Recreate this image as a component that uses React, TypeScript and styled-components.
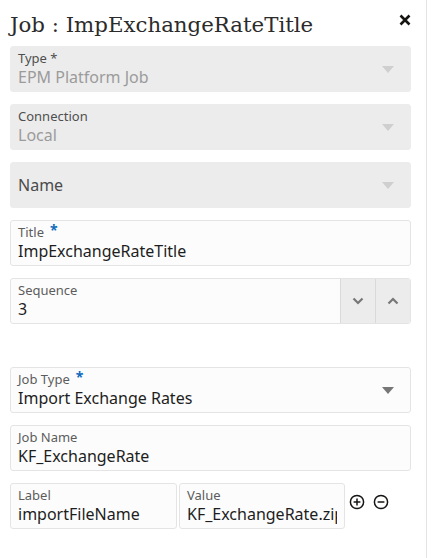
import styled, { createGlobalStyle } from "styled-components";

const GlobalStyle = createGlobalStyle`
  html, body {
    margin: 0;
    padding: 0;
    background: #ffffff;
  }
  body {
    font-family: "Noto Sans", "Open Sans", sans-serif;
  }
`;

const Panel = styled.div`
  box-sizing: border-box;
  width: 427px;
  height: 558px;
  border-right: 1px solid #e3e3e3;
  padding: 0 15px 0 10px;
  overflow: hidden;
`;

const Header = styled.div`
  display: flex;
  justify-content: space-between;
  align-items: flex-start;
  height: 46px;
`;

const Heading = styled.h1`
  margin: 11px 0 0;
  font-family: "DejaVu Serif", "Liberation Serif", serif;
  font-weight: 400;
  font-size: 21.3px;
  line-height: 28px;
  color: #2b2b2b;
`;

const Close = styled.button`
  margin: 11px -3px 0 0;
  padding: 0;
  border: none;
  background: none;
  width: 18px;
  height: 18px;
  display: flex;
  align-items: center;
  justify-content: center;
  cursor: pointer;
`;

const Form = styled.div`
  display: flex;
  flex-direction: column;
`;

const Field = styled.div<{ $disabled?: boolean; $gap?: number }>`
  box-sizing: border-box;
  height: 46px;
  margin-bottom: ${(p) => p.$gap ?? 12}px;
  display: flex;
  align-items: stretch;
  border-radius: 3px;
  border: 1px solid ${(p) => (p.$disabled ? "#ececec" : "#e4e4e4")};
  background: ${(p) => (p.$disabled ? "#ececec" : "#fcfcfc")};
  overflow: hidden;
`;

const FieldBody = styled.div<{ $center?: boolean }>`
  flex: 1;
  min-width: 0;
  padding: 0 7px;
  display: flex;
  flex-direction: column;
  justify-content: ${(p) => (p.$center ? "center" : "flex-start")};
  padding-top: ${(p) => (p.$center ? 0 : 3)}px;
`;

const Label = styled.div<{ $disabled?: boolean }>`
  display: flex;
  align-items: flex-start;
  height: 17px;
  font-size: 13px;
  line-height: 17px;
  color: ${(p) => (p.$disabled ? "#4f4f4f" : "#5c5c5c")};
  white-space: nowrap;
`;

const Required = styled.span`
  color: #0f6cbd;
  font-size: 14px;
  font-weight: 700;
  line-height: 12px;
  margin-left: 6px;
`;

const Value = styled.div<{ $disabled?: boolean }>`
  font-size: 16px;
  line-height: 20px;
  color: ${(p) => (p.$disabled ? "#9b9b9b" : "#1e1e1e")};
  white-space: nowrap;
  overflow: hidden;
`;

const Placeholder = styled.div`
  font-size: 16px;
  line-height: 20px;
  color: #4a4a4a;
`;

const Caret = styled.div<{ $disabled?: boolean }>`
  width: 44px;
  display: flex;
  align-items: center;
  justify-content: center;
  &::after {
    content: "";
    border-left: 6px solid transparent;
    border-right: 6px solid transparent;
    border-top: 7px solid ${(p) => (p.$disabled ? "#cfcfcf" : "#777777")};
  }
`;

const StepButton = styled.button`
  width: 35px;
  border: none;
  border-left: 1px solid #dadada;
  background: #ececec;
  padding: 0;
  display: flex;
  align-items: center;
  justify-content: center;
  cursor: pointer;
`;

const Spacer = styled.div`
  height: 43px;
`;

const PairRow = styled.div`
  display: flex;
  align-items: flex-start;
  gap: 2px;
`;

const PairField = styled(Field)<{ $w: number }>`
  width: ${(p) => p.$w}px;
`;

const RowActions = styled.div`
  display: flex;
  gap: 8px;
  padding: 11px 0 0 2px;
`;

const IconButton = styled.button`
  border: none;
  background: none;
  padding: 0;
  width: 16px;
  height: 16px;
  cursor: pointer;
`;

const Chevron = ({ up }: { up?: boolean }) => (
  <svg width="12" height="8" viewBox="0 0 12 8">
    <path
      d={up ? "M1.5 6.5 L6 2 L10.5 6.5" : "M1.5 1.5 L6 6 L10.5 1.5"}
      fill="none"
      stroke="#777"
      strokeWidth="2.2"
    />
  </svg>
);

const CircleIcon = ({ plus }: { plus?: boolean }) => (
  <svg width="16" height="16" viewBox="0 0 16 16">
    <circle cx="8" cy="8" r="6.6" fill="none" stroke="#161513" strokeWidth="1.5" />
    <path d="M4.6 8 H11.4" stroke="#161513" strokeWidth="1.5" />
    {plus && <path d="M8 4.6 V11.4" stroke="#161513" strokeWidth="1.5" />}
  </svg>
);

export default function App() {
  return (
    <>
      <GlobalStyle />
      <Panel>
        <Header>
          <Heading>Job : ImpExchangeRateTitle</Heading>
          <Close aria-label="Close">
            <svg width="12" height="12" viewBox="0 0 12 12">
              <path d="M1.5 1.5 L10.5 10.5 M10.5 1.5 L1.5 10.5" stroke="#161513" strokeWidth="2.6" />
            </svg>
          </Close>
        </Header>
        <Form>
          <Field $disabled>
            <FieldBody>
              <Label $disabled>Type *</Label>
              <Value $disabled>EPM Platform Job</Value>
            </FieldBody>
            <Caret $disabled />
          </Field>
          <Field $disabled>
            <FieldBody>
              <Label $disabled>Connection</Label>
              <Value $disabled>Local</Value>
            </FieldBody>
            <Caret $disabled />
          </Field>
          <Field $disabled>
            <FieldBody $center>
              <Placeholder>Name</Placeholder>
            </FieldBody>
            <Caret $disabled />
          </Field>
          <Field>
            <FieldBody>
              <Label>
                Title<Required>*</Required>
              </Label>
              <Value>ImpExchangeRateTitle</Value>
            </FieldBody>
          </Field>
          <Field $gap={0}>
            <FieldBody>
              <Label>Sequence</Label>
              <Value>3</Value>
            </FieldBody>
            <StepButton aria-label="Decrease">
              <Chevron />
            </StepButton>
            <StepButton aria-label="Increase">
              <Chevron up />
            </StepButton>
          </Field>
          <Spacer />
          <Field>
            <FieldBody>
              <Label>
                Job Type<Required>*</Required>
              </Label>
              <Value>Import Exchange Rates</Value>
            </FieldBody>
            <Caret />
          </Field>
          <Field>
            <FieldBody>
              <Label>Job Name</Label>
              <Value>KF_ExchangeRate</Value>
            </FieldBody>
          </Field>
          <PairRow>
            <PairField $w={167}>
              <FieldBody>
                <Label>Label</Label>
                <Value>importFileName</Value>
              </FieldBody>
            </PairField>
            <PairField $w={166}>
              <FieldBody>
                <Label>Value</Label>
                <Value>KF_ExchangeRate.zip</Value>
              </FieldBody>
            </PairField>
            <RowActions>
              <IconButton aria-label="Add">
                <CircleIcon plus />
              </IconButton>
              <IconButton aria-label="Remove">
                <CircleIcon />
              </IconButton>
            </RowActions>
          </PairRow>
        </Form>
      </Panel>
    </>
  );
}
